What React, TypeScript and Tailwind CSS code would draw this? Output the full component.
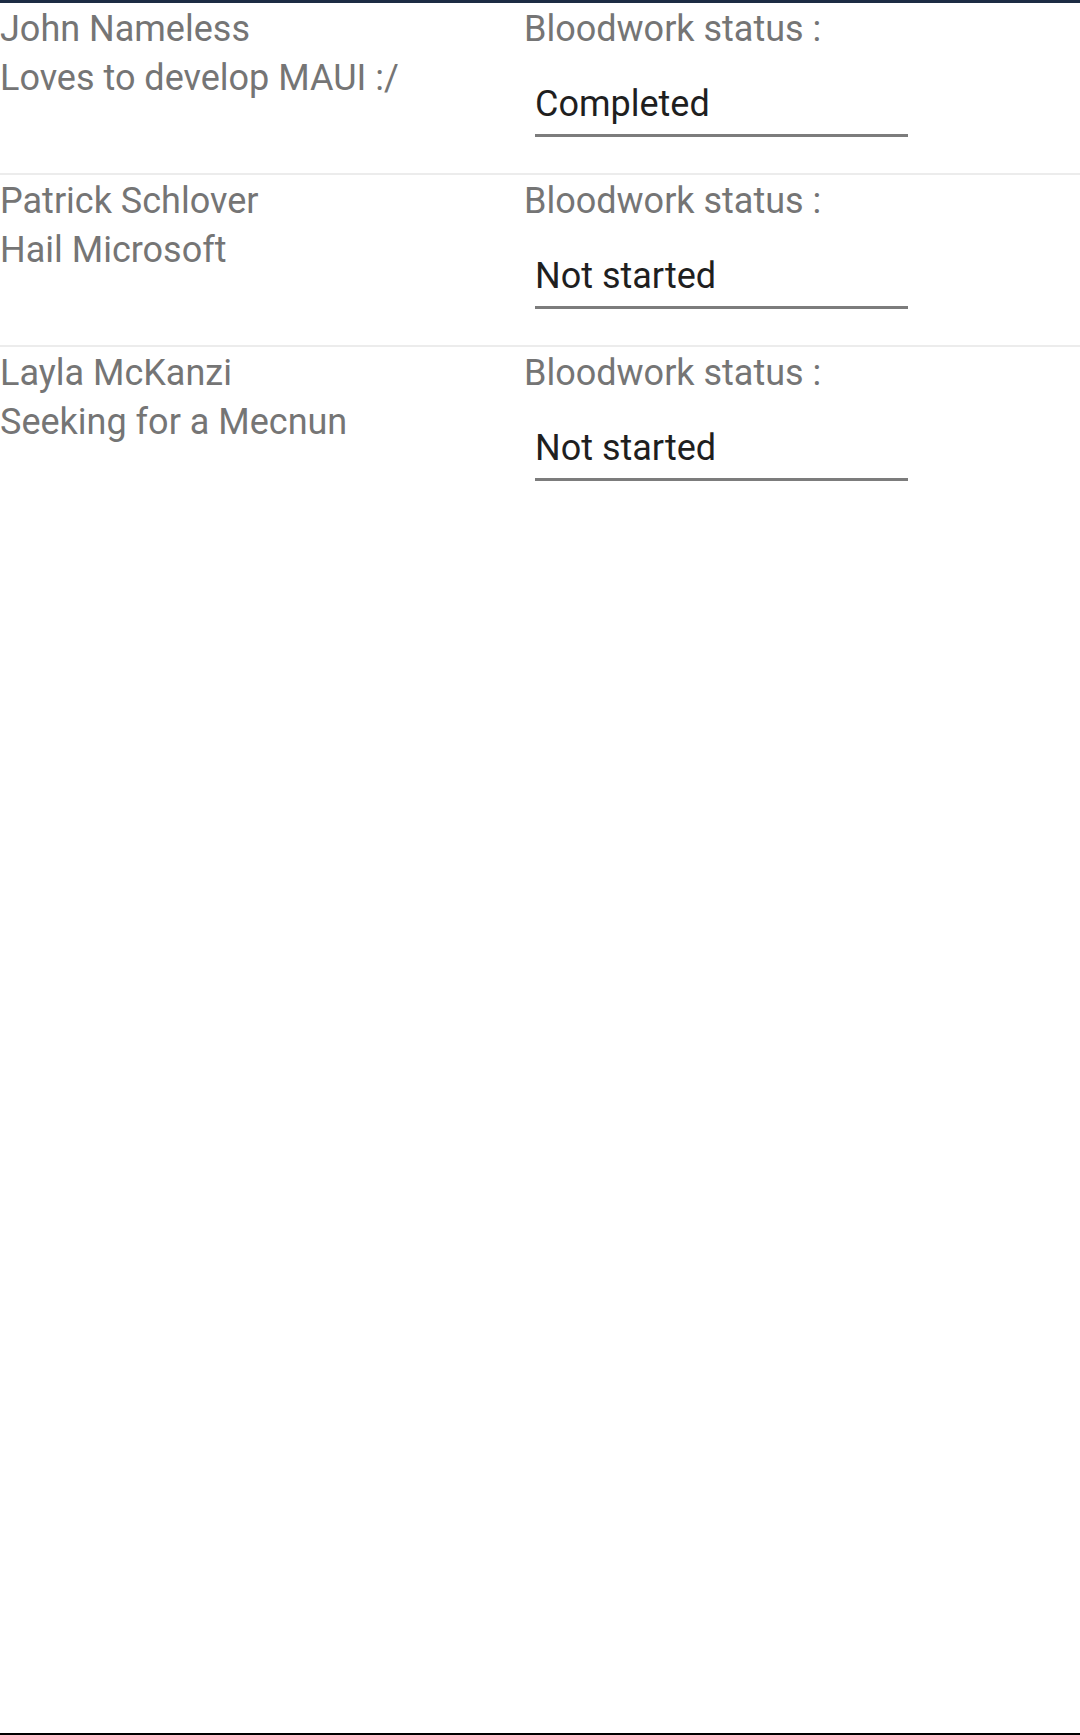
import React from 'react';

const PATIENTS = [
  { name: 'John Nameless', note: 'Loves to develop MAUI :/', status: 'Completed' },
  { name: 'Patrick Schlover', note: 'Hail Microsoft', status: 'Not started' },
  { name: 'Layla McKanzi', note: 'Seeking for a Mecnun', status: 'Not started' },
];

export default function App() {
  return (
    <div className="h-[1735px] w-[1080px] bg-white flex flex-col font-['Roboto',sans-serif] text-[36px]">
      {/* status bar edge */}
      <div className="h-[3px] bg-[#1c2c44] shrink-0" />

      <div className="flex-1 flex flex-col">
        {PATIENTS.map((p, i) => (
          <div key={p.name}>
            <div className="h-[170px] pt-[2px] grid grid-cols-[524px_1fr]">
              <div className="text-[#757575]">
                <p className="leading-[49px]">{p.name}</p>
                <p className="leading-[49px]">{p.note}</p>
              </div>
              <div>
                <p className="leading-[49px] text-[#757575]">Bloodwork status :</p>
                <div className="ml-[11px] mt-[29px] w-[373px]">
                  <p className="leading-[43px] text-[#1f1f1f]">{p.status}</p>
                  <div className="mt-[8px] h-[3px] bg-[#7c7c7c]" />
                </div>
              </div>
            </div>
            {i < PATIENTS.length - 1 && <div className="h-[2px] bg-[#ececec]" />}
          </div>
        ))}
      </div>

      <div className="h-[2px] bg-black shrink-0" />
    </div>
  );
}
